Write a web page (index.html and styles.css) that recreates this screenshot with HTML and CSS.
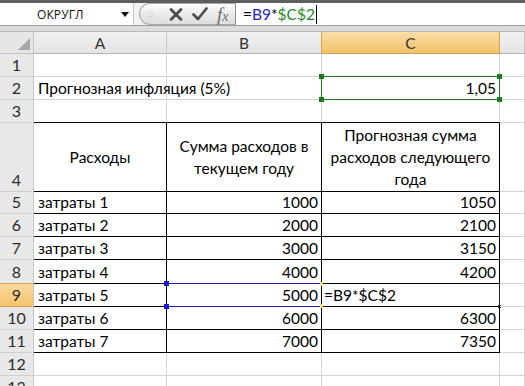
FILE: index.html
```html
<!DOCTYPE html>
<html lang="ru">
<head>
<meta charset="utf-8">
<title>Excel</title>
<link rel="stylesheet" href="styles.css">
</head>
<body>
<div class="app">
  <div class="fbar">
    <div class="namebox"><span class="name">ОКРУГЛ</span><span class="arrow"></span></div>
    <div class="btns">
      <span class="knob"></span>
      <svg class="ico" width="14" height="13" viewBox="0 0 14 13"><path d="M2 1.5 L12 11.5 M12 1.5 L2 11.5" stroke="#4a4a4a" stroke-width="2.6" stroke-linecap="round"/></svg>
      <svg class="ico" width="16" height="14" viewBox="0 0 16 14"><path d="M1.5 7.5 L6 12 L14.5 1.5" stroke="#4a4a4a" stroke-width="2.6" fill="none" stroke-linejoin="round" stroke-linecap="round"/></svg>
      <span class="fx">f<span class="fxx">x</span></span>
    </div>
    <div class="formula"><span>=</span><span class="ref-b">B9</span><span>*</span><span class="ref-c">$C$2</span><span class="caret"></span></div>
  </div>
  <div class="band"></div>
  <div class="sheet">
    <!-- header row -->
    <div class="corner"><span class="tri"></span></div>
    <div class="ch">A</div>
    <div class="ch">B</div>
    <div class="ch ch-sel">C</div>
    <div class="ch"></div>

    <!-- row 1 -->
    <div class="rh">1</div><div class="c"></div><div class="c"></div><div class="c"></div><div class="c"></div>
    <!-- row 2 -->
    <div class="rh">2</div>
    <div class="c">Прогнозная инфляция (5%)</div>
    <div class="c"></div>
    <div class="c num green-box">1,05<span class="h h-tl"></span><span class="h h-tr"></span><span class="h h-bl"></span><span class="h h-br"></span></div>
    <div class="c"></div>
    <!-- row 3 -->
    <div class="rh">3</div><div class="c bb"></div><div class="c bb"></div><div class="c bb"></div><div class="c"></div>
    <!-- row 4 -->
    <div class="rh rh-bottom">4</div>
    <div class="c t head">Расходы</div>
    <div class="c t head">Сумма расходов в текущем году</div>
    <div class="c t head">Прогнозная сумма расходов следующего года</div>
    <div class="c"></div>
    <!-- rows 5-8 -->
    <div class="rh">5</div><div class="c t">затраты 1</div><div class="c t num">1000</div><div class="c t num">1050</div><div class="c"></div>
    <div class="rh">6</div><div class="c t">затраты 2</div><div class="c t num">2000</div><div class="c t num">2100</div><div class="c"></div>
    <div class="rh">7</div><div class="c t">затраты 3</div><div class="c t num">3000</div><div class="c t num">3150</div><div class="c"></div>
    <div class="rh">8</div><div class="c t">затраты 4</div><div class="c t num">4000</div><div class="c t num">4200</div><div class="c"></div>
    <!-- row 9 -->
    <div class="rh rh-sel">9</div>
    <div class="c t">затраты 5</div>
    <div class="c t num blue-box">5000<span class="bh bh-tl"></span><span class="bh bh-bl"></span><span class="yh yh-tr"></span><span class="yh yh-br"></span></div>
    <div class="c t edit">=B9*$C$2<span class="fill"></span></div>
    <div class="c"></div>
    <!-- rows 10-11 -->
    <div class="rh">10</div><div class="c t">затраты 6</div><div class="c t num">6000</div><div class="c t num">6300</div><div class="c"></div>
    <div class="rh">11</div><div class="c t">затраты 7</div><div class="c t num">7000</div><div class="c t num">7350</div><div class="c"></div>
    <!-- rows 12-13 -->
    <div class="rh">12</div><div class="c"></div><div class="c"></div><div class="c"></div><div class="c"></div>
    <div class="rh rh-cut">13</div><div class="c"></div><div class="c"></div><div class="c"></div><div class="c"></div>
  </div>
</div>
</body>
</html>
```

FILE: styles.css
```css
* { box-sizing: border-box; }
html, body { margin: 0; padding: 0; background: #fff; }
body { width: 525px; height: 386px; overflow: hidden; }

.app {
  width: 525px;
  height: 386px;
  overflow: hidden;
  font-family: "Lato", "Open Sans", sans-serif;
}

/* formula bar */
.fbar {
  height: 26px;
  display: flex;
  align-items: stretch;
  border-top: 3px solid #5e5e5e;
  border-bottom: 1px solid #9c9c9c;
  background: #f3f3f3;
}
.namebox {
  width: 134px;
  background: #fff;
  display: flex;
  align-items: center;
  padding-left: 37px;
  border-right: 1px solid #c8c8c8;
}
.name {
  font-family: "Open Sans", sans-serif;
  font-size: 12px;
  color: #111;
  letter-spacing: 0.1px;
}
.arrow {
  margin-left: auto;
  margin-right: 4px;
  width: 0; height: 0;
  border-left: 4px solid transparent;
  border-right: 4px solid transparent;
  border-top: 5px solid #111;
}
.btns {
  width: 97px;
  margin-left: 5px;
  display: flex;
  align-items: center;
  gap: 9px;
  padding-left: 6px;
  border: 1px solid #a9a9a9;
  border-right: 1px solid #8e8e8e;
  border-radius: 12px 0 0 12px;
  background: linear-gradient(#fdfdfd, #e9e9e9 55%, #dedede);
}
.knob {
  width: 7px; height: 7px;
  border-radius: 50%;
  background: radial-gradient(circle at 40% 40%, #f4f4f4, #c9c9c9);
  margin-right: 7px;
}
.ico { display: block; }
.fx {
  font-family: "Liberation Serif", serif;
  font-style: italic;
  font-size: 19px;
  color: #6c6c6c;
  margin-left: 0;
  line-height: 1;
}
.fxx { font-size: 14px; }
.formula {
  flex: 1;
  background: #fff;
  display: flex;
  align-items: center;
  padding-left: 7px;
  font-size: 15.5px;
  color: #000;
}
.ref-b { color: #2323b8; }
.ref-c { color: #1f8a1f; }
.caret {
  width: 1px;
  height: 19px;
  background: #000;
  margin-left: 1px;
}

.band {
  height: 5px;
  background: #dcdcdc;
}

/* sheet grid */
.sheet {
  display: grid;
  grid-template-columns: 34px 133px 155px 178px 25px;
  grid-template-rows: 23px 23px 23px 23px 69px 22px 23px 23px 24px 23px 23px 23px 23px 23px;
  font-size: 15.5px;
  color: #000;
}
.corner, .ch, .rh, .c {
  border-right: 1px solid #d4d4d4;
  border-bottom: 1px solid #d4d4d4;
}
.corner {
  background: #e6e6e6;
  border-top: 1px solid #b8b8b8;
  border-right: 1px solid #c5c5c5;
  border-bottom: 1px solid #c5c5c5;
  position: relative;
}
.tri {
  position: absolute;
  right: 3px;
  bottom: 3px;
  width: 0; height: 0;
  border-left: 12px solid transparent;
  border-bottom: 12px solid #a6a6a6;
}
.ch {
  background: linear-gradient(#f1f1f1, #e4e4e4);
  border-top: 1px solid #b8b8b8;
  border-right: 1px solid #c8c8c8;
  border-bottom: 1px solid #b4b4b4;
  display: flex;
  align-items: center;
  justify-content: center;
  color: #333;
  font-size: 15.5px;
}
.ch-sel {
  background: linear-gradient(#f9dea6, #f2c26a);
  border-right-color: #e0a347;
  border-left: 1px solid #e0a347;
  border-bottom-color: #c8a057;
  margin-left: -1px;
}
.rh {
  background: #e8e8e8;
  border-right: 1px solid #c5c5c5;
  border-bottom: 1px solid #d0d0d0;
  display: flex;
  align-items: flex-end;
  justify-content: center;
  padding-bottom: 1px;
  color: #2b2b2b;
  font-size: 16px;
  line-height: 20px;
}
.rh-cut { overflow: hidden; }
.rh-sel {
  background: linear-gradient(#f9d99c, #f4c46c);
  border-bottom-color: #d9a250;
  border-top: 1px solid #d9a250;
  margin-top: -1px;
}
.c {
  display: flex;
  align-items: flex-end;
  padding: 0 3px 1px 4px;
  white-space: nowrap;
  line-height: 20px;
  position: relative;
}
.num { justify-content: flex-end; }

/* black table borders */
.bb { border-bottom-color: #000; }
.t { border-right-color: #000; border-bottom-color: #000; }
.head {
  white-space: normal;
  text-align: center;
  justify-content: center;
  align-items: center;
  line-height: 22px;
  padding: 0 4px;
}

/* referenced C2 (green) */
.green-box {
  border-right-color: #1e7b1e;
  border-bottom-color: #1e7b1e;
  z-index: 2;
  box-shadow: -1px -1px 0 #1e7b1e;
}
.h {
  position: absolute;
  width: 5px; height: 5px;
  background: #1e7b1e;
}
.h-tl { left: -3px; top: -3px; }
.h-tr { right: -3px; top: -3px; }
.h-bl { left: -3px; bottom: -3px; }
.h-br { right: -3px; bottom: -3px; }

/* referenced B9 (blue) */
.blue-box {
  border-bottom-color: #2020a8;
  box-shadow: 0 -1px 0 #2020a8;
  z-index: 2;
}
.bh {
  position: absolute;
  width: 5px; height: 5px;
  background: #1a1ad0;
}
.bh-tl { left: -3px; top: -3px; }
.bh-bl { left: -3px; bottom: -3px; }
.yh {
  position: absolute;
  width: 3px; height: 4px;
  background: #e9e37a;
}
.yh-tr { right: -2px; top: -2px; }
.yh-br { right: -2px; bottom: -2px; }

/* editing cell C9 */
.edit {
  padding-left: 2px;
  border-right-color: #222;
}
.fill {
  position: absolute;
  right: -2px;
  bottom: -2px;
  width: 3px; height: 3px;
  background: #333;
}
```
